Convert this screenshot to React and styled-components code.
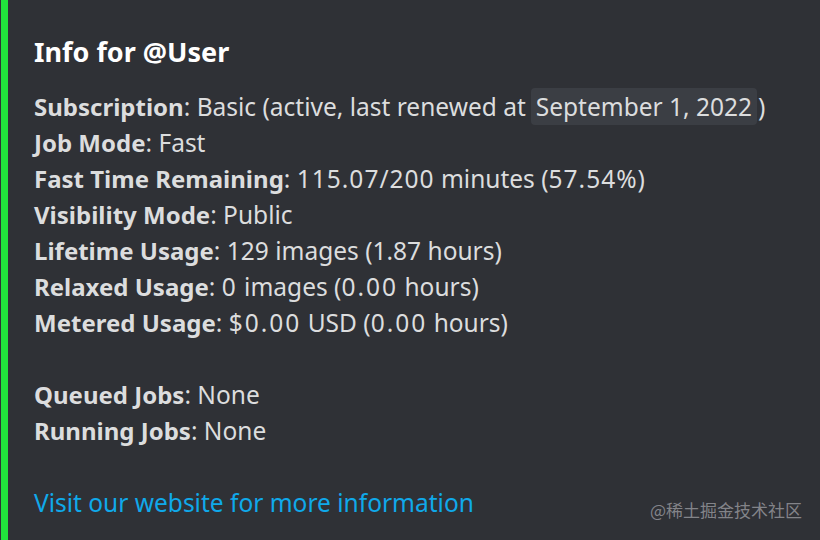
import React from "react";
import styled, { createGlobalStyle } from "styled-components";

const Global = createGlobalStyle`
  html, body { margin: 0; padding: 0; background: #2f3136; }
  body { width: 820px; height: 540px; overflow: hidden; }
`;

const Embed = styled.div`
  position: relative;
  display: flex;
  width: 820px;
  height: 540px;
  background: #2f3136;
  font-family: "Noto Sans", "Open Sans", sans-serif;
`;

const Bar = styled.div`
  width: 7px;
  margin-left: 1px;
  background: #21e43c;
  flex: none;
`;

const Content = styled.div`
  padding: 34px 0 0 26px;
  display: flex;
  flex-direction: column;
`;

const Title = styled.div`
  color: #ffffff;
  font-weight: 700;
  font-size: 27px;
  line-height: 36px;
  margin-bottom: 19px;
`;

const Line = styled.div`
  color: #dcddde;
  font-size: 24.5px;
  line-height: 36px;
  height: 36px;
  white-space: nowrap;
`;

const Label = styled.b`
  font-weight: 700;
  font-size: 24px;
`;

const Num = styled.span`
  letter-spacing: ${(p) => p.$ls || 1}px;
`;

const Chip = styled.span`
  background: #3b3e44;
  border-radius: 4px;
  padding: 2px 5px;
  margin-left: 5px;
  margin-right: 1px;
`;

const Link = styled.a`
  color: #0fa9ea;
  text-decoration: none;
`;

const Watermark = styled.div`
  position: absolute;
  right: 18px;
  bottom: 18px;
  color: rgba(190, 190, 195, 0.6);
  font-size: 17px;
  font-family: "Noto Sans CJK SC", sans-serif;
`;

const rows = [
  ["Job Mode", "Fast"],
  ["Fast Time Remaining", <><Num>115.07/200</Num> minutes (<Num>57.54%</Num>)</>],
  ["Visibility Mode", "Public"],
  ["Lifetime Usage", "129 images (1.87 hours)"],
  ["Relaxed Usage", <><Num $ls={2}>0</Num> images (<Num $ls={2}>0.00</Num> hours)</>],
  ["Metered Usage", <><Num $ls={2}>$0.00</Num> USD (<Num $ls={2}>0.00</Num> hours)</>],
];

export default function App() {
  return (
    <>
      <Global />
      <Embed>
        <Bar />
        <Content>
          <Title>Info for @User</Title>
          <Line>
            <Label>Subscription</Label>: Basic (active, last renewed at<Chip>September 1, 2022</Chip>)
          </Line>
          {rows.map(([k, v]) => (
            <Line key={k}>
              <Label>{k}</Label>: {v}
            </Line>
          ))}
          <Line />
          <Line>
            <Label>Queued Jobs</Label>: None
          </Line>
          <Line>
            <Label>Running Jobs</Label>: None
          </Line>
          <Line />
          <Line>
            <Link href="#">Visit our website for more information</Link>
          </Line>
        </Content>
        <Watermark>@稀土掘金技术社区</Watermark>
      </Embed>
    </>
  );
}
